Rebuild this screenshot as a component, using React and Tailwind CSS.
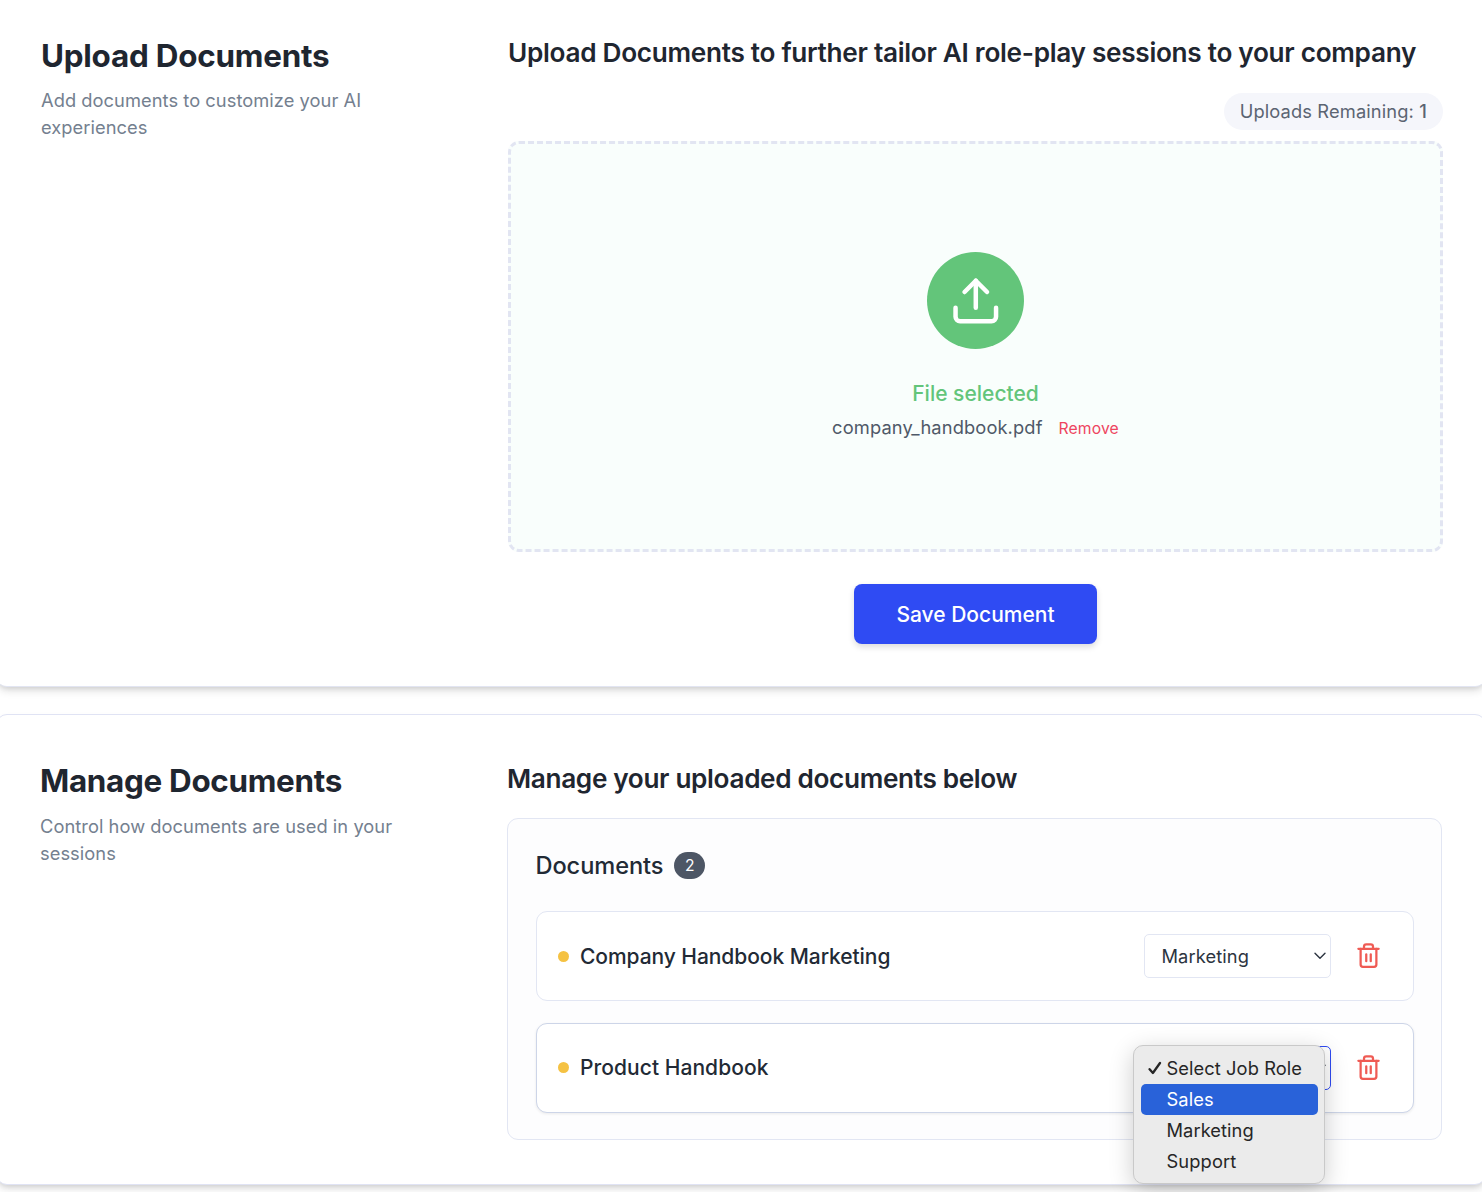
import { Trash2, Upload } from "lucide-react";

function SectionIntro({ title, children, className }) {
  return (
    <div className="w-[467px] shrink-0">
      <h1 className={`text-[31.4px] font-bold text-[#1f2630] ${className}`}>{title}</h1>
      <p className="w-[380px] text-[18.3px] leading-[27px] tracking-[0.05px] text-[#74808f]">{children}</p>
    </div>
  );
}

function ChevronIcon() {
  return (
    <svg className="ml-auto" width="12" height="8" viewBox="0 0 12 8" fill="none" stroke="#2c3440" strokeWidth="1.4" strokeLinecap="round" strokeLinejoin="round">
      <path d="M1 1.2 6 6.3l5-5.1" />
    </svg>
  );
}

function CheckIcon() {
  return (
    <svg className="mr-[5px]" width="14" height="14" viewBox="0 0 14 14" fill="none" stroke="#262626" strokeWidth="2.3" strokeLinecap="round" strokeLinejoin="round">
      <path d="M1.6 8.2 4.9 12 12 2" />
    </svg>
  );
}

function RoleSelect({ value, focused, children }) {
  return (
    <div className="relative h-11 w-[187px]">
      <button
        className={`flex h-full w-full items-center justify-between rounded-[5px] border bg-white pr-[4px] pl-[17px] text-[18.3px] tracking-[0.1px] text-[#2c3440] ${
          focused ? "border-[#2f4bf3]" : "border-[#e2e6f3]"
        }`}
      >
        <span className="pt-px">{value}</span>
        <ChevronIcon />
      </button>
      {children}
    </div>
  );
}

function DocumentRow({ name, active, tracking, children }) {
  return (
    <div
      className={`flex h-[90px] items-center rounded-[11px] border bg-white pr-[31px] pl-[21.5px] ${
        active ? "border-[#cdd5e8] shadow-[0_1px_3px_rgba(0,0,0,0.08)]" : "border-[#e2e6f3]"
      }`}
    >
      <span className="size-[11px] rounded-full bg-[#f5c243]" />
      <span className={`ml-[11px] flex-1 pt-px text-[21px] font-[460] text-[#222a35] ${tracking}`}>{name}</span>
      {children}
      <button className="ml-[24px] pb-px">
        <Trash2 size={27} color="#ef5b54" strokeWidth={2} />
      </button>
    </div>
  );
}

function RoleMenu() {
  return (
    <ul className="absolute -top-px -left-[11px] z-10 h-[139px] w-[192px] rounded-[10px] border border-[#c9c9c9] bg-[#ebebeb] pr-[6px] pl-[7px] pt-[7px] text-[18.3px] leading-[31px] text-[#262626] shadow-[0_6px_24px_rgba(0,0,0,0.2)]">
      <li className="flex h-[31px] items-center pl-[7px] tracking-[0.08px]">
        <CheckIcon />
        Select Job Role
      </li>
      <li className="h-[31px] rounded-[5px] bg-[#2962d9] pl-[26px] tracking-[0.08px] text-white">Sales</li>
      <li className="h-[31px] pl-[26px] tracking-[0.06px]">Marketing</li>
      <li className="h-[31px] pl-[26px] tracking-[0.12px]">Support</li>
    </ul>
  );
}

export default function App() {
  return (
    <div className="h-[1192px] overflow-hidden bg-white font-['Inter',sans-serif]">
      <section className="-mx-1 flex h-[687px] rounded-b-[11px] border-b border-[#e2e5f2] bg-white pt-[34px] pl-[45px] shadow-[0_5px_8px_-1px_rgba(0,0,0,0.12),0_3px_5px_-2px_rgba(0,0,0,0.1)]">
        <SectionIntro title="Upload Documents" className="mb-[8px] leading-[45px] tracking-[-0.22px]">
          Add documents to customize your AI experiences
        </SectionIntro>
        <div className="w-[935px]">
          <h2 className="text-[26.2px] leading-[38px] font-semibold tracking-[-0.3px] whitespace-nowrap text-[#1f2630]">
            Upload Documents to further tailor AI role-play sessions to your company
          </h2>
          <div className="mt-[21px] flex justify-end">
            <div className="flex h-[37px] items-center rounded-full bg-[#f5f6fb] pr-[16px] pl-[16px] text-[18.3px] tracking-[0.13px] whitespace-pre text-[#5b6472]">
              Uploads Remaining: <span className="font-medium">1</span>
            </div>
          </div>
          <div className="mt-[11px] flex h-[411px] flex-col items-center rounded-[11px] border-3 border-dashed border-[#e2e5f2] bg-[#f9fefc] pt-[108px]">
            <div className="flex size-[97px] items-center justify-center rounded-full bg-[#63c57a] text-white">
              <Upload className="-translate-x-[0.2px]" size={54} strokeWidth={2} />
            </div>
            <p className="mt-[29px] text-[21px] leading-[32px] font-[460] text-[#63c57a]">File selected</p>
            <div className="mt-[4px] flex items-center leading-[27px]">
              <span className="pb-px text-[18.3px] tracking-[0.12px] text-[#4f5968]">company_handbook.pdf</span>
              <button className="ml-[16px] pt-px text-[15.7px] tracking-[0.14px] text-[#ee4560]">Remove</button>
            </div>
          </div>
          <div className="mt-[32px] flex justify-center">
            <button className="h-[60px] w-[243px] rounded-[8px] bg-[#2f4bf3] pt-px text-[21px] font-[460] text-white shadow-[0_3px_6px_rgba(0,0,0,0.14)]">
              Save Document
            </button>
          </div>
        </div>
      </section>

      <section className="-mx-1 mt-[27px] flex h-[471px] rounded-[11px] border border-[#e0e3f4] bg-white pt-[45px] pl-[43px] shadow-[0_5px_8px_-1px_rgba(0,0,0,0.12),0_3px_5px_-2px_rgba(0,0,0,0.1)]">
        <SectionIntro title="Manage Documents" className="mb-[10px] leading-[43px] tracking-[-0.31px]">
          Control how documents are used in your sessions
        </SectionIntro>
        <div className="w-[935px]">
          <h2 className="text-[26.2px] leading-[37px] font-semibold tracking-[-0.35px] text-[#1f2630]">
            Manage your uploaded documents below
          </h2>
          <div className="mt-[21px] h-[322px] rounded-[11px] border border-[#e2e6f3] bg-[#fdfdfe] px-[27.5px] pt-[32px]">
            <div className="flex h-[28px] items-center">
              <h3 className="pt-px text-[23.6px] font-[460] tracking-[-0.08px] text-[#222a35]">Documents</h3>
              <span className="ml-[11px] flex h-[27px] w-[31px] items-center justify-center rounded-full bg-[#4d5665] pt-px text-[15.7px] text-white">
                2
              </span>
            </div>
            <div className="mt-[32px] flex flex-col gap-[21.5px]">
              <DocumentRow name="Company Handbook Marketing" tracking="tracking-[-0.06px]">
                <RoleSelect value="Marketing" />
              </DocumentRow>
              <DocumentRow name="Product Handbook" tracking="tracking-[0.05px]" active>
                <RoleSelect focused>
                  <RoleMenu />
                </RoleSelect>
              </DocumentRow>
            </div>
          </div>
        </div>
      </section>
    </div>
  );
}
